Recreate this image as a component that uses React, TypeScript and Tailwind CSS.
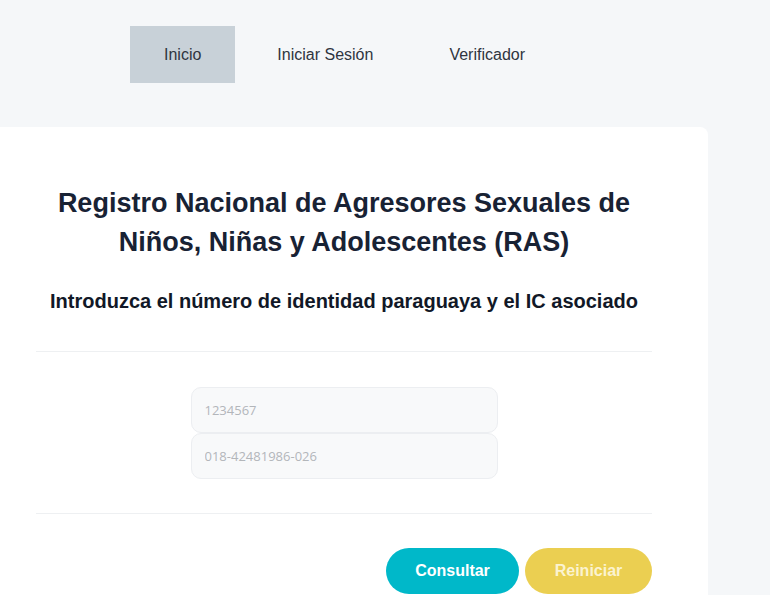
const navItems = [
  { id: 1, label: "Inicio", active: true },
  { id: 2, label: "Iniciar Sesión", active: false },
  { id: 3, label: "Verificador", active: false },
];

const App = () => {
  return (
    <div className="h-[595px] bg-[#f5f7f9] font-['Liberation_Sans',Arial,sans-serif] overflow-hidden">
      <nav className="flex gap-2 pl-[130px] pt-[26px] h-[127px]">
        {navItems.map((item) => (
          <a
            key={item.id}
            className={`h-[57px] px-[34px] flex items-center text-[16px] text-[#2f3540] ${item.active ? "bg-[#c8d1d8]" : ""}`}
          >
            {item.label}
          </a>
        ))}
      </nav>

      <main className="w-[708px] bg-white rounded-tr-lg pt-[57px] pb-10">
        <div className="ml-[36px] w-[616px]">
          <h1 className="text-center text-[27px] leading-[39px] font-bold text-[#182234]">
            Registro Nacional de Agresores Sexuales de
            <br />
            Niños, Niñas y Adolescentes (RAS)
          </h1>
          <h2 className="mt-[27px] text-center text-[20px] leading-[24px] font-bold text-[#111827]">
            Introduzca el número de identidad paraguaya y el IC asociado
          </h2>

          <hr className="mt-[38px] border-t border-[#eef0f2]" />

          <div className="flex flex-col items-center pt-[35px] pb-[34px]">
            <input
              placeholder="1234567"
              className="w-[307px] h-[46px] rounded-[10px] border border-[#eceef1] bg-[#f8f9fa] px-[13px] text-[13px] font-['Open_Sans',sans-serif] placeholder:text-[#b3b6ba] outline-none"
            />
            <input
              placeholder="018-42481986-026"
              className="w-[307px] h-[46px] rounded-[10px] border border-[#eceef1] bg-[#f8f9fa] px-[13px] text-[13px] font-['Open_Sans',sans-serif] placeholder:text-[#b3b6ba] outline-none"
            />
          </div>

          <hr className="border-t border-[#eef0f2]" />

          <div className="flex justify-end gap-[6px] pt-[34px]">
            <button className="w-[133px] h-[46px] rounded-full bg-[#00b8c9] text-white font-bold text-[16px]">
              Consultar
            </button>
            <button className="w-[127px] h-[46px] rounded-full bg-[#ebcf51] text-[#fbf3d0] font-bold text-[16px]">
              Reiniciar
            </button>
          </div>
        </div>
      </main>
    </div>
  );
};

export default App;
